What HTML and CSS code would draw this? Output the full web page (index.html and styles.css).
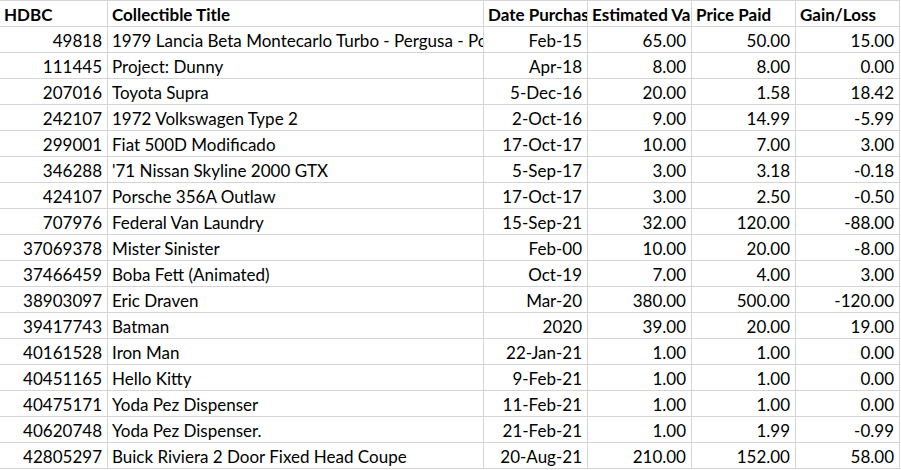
FILE: index.html
```html
<!DOCTYPE html>
<html>
<head>
<meta charset="utf-8">
<link rel="stylesheet" href="styles.css">
</head>
<body>
<div class="sheet">
  <div class="c h">HDBC</div><div class="c h">Collectible Title</div><div class="c h">Date Purchased</div><div class="c h">Estimated Value</div><div class="c h">Price Paid</div><div class="c h">Gain/Loss</div>
  <div class="c r">49818</div><div class="c">1979 Lancia Beta Montecarlo Turbo - Pergusa - Porsche</div><div class="c r">Feb-15</div><div class="c r">65.00</div><div class="c r">50.00</div><div class="c r">15.00</div>
  <div class="c r">111445</div><div class="c">Project: Dunny</div><div class="c r">Apr-18</div><div class="c r">8.00</div><div class="c r">8.00</div><div class="c r">0.00</div>
  <div class="c r">207016</div><div class="c">Toyota Supra</div><div class="c r">5-Dec-16</div><div class="c r">20.00</div><div class="c r">1.58</div><div class="c r">18.42</div>
  <div class="c r">242107</div><div class="c">1972 Volkswagen Type 2</div><div class="c r">2-Oct-16</div><div class="c r">9.00</div><div class="c r">14.99</div><div class="c r">-5.99</div>
  <div class="c r">299001</div><div class="c">Fiat 500D Modificado</div><div class="c r">17-Oct-17</div><div class="c r">10.00</div><div class="c r">7.00</div><div class="c r">3.00</div>
  <div class="c r">346288</div><div class="c">'71 Nissan Skyline 2000 GTX</div><div class="c r">5-Sep-17</div><div class="c r">3.00</div><div class="c r">3.18</div><div class="c r">-0.18</div>
  <div class="c r">424107</div><div class="c">Porsche 356A Outlaw</div><div class="c r">17-Oct-17</div><div class="c r">3.00</div><div class="c r">2.50</div><div class="c r">-0.50</div>
  <div class="c r">707976</div><div class="c">Federal Van Laundry</div><div class="c r">15-Sep-21</div><div class="c r">32.00</div><div class="c r">120.00</div><div class="c r">-88.00</div>
  <div class="c r">37069378</div><div class="c">Mister Sinister</div><div class="c r">Feb-00</div><div class="c r">10.00</div><div class="c r">20.00</div><div class="c r">-8.00</div>
  <div class="c r">37466459</div><div class="c">Boba Fett (Animated)</div><div class="c r">Oct-19</div><div class="c r">7.00</div><div class="c r">4.00</div><div class="c r">3.00</div>
  <div class="c r">38903097</div><div class="c">Eric Draven</div><div class="c r">Mar-20</div><div class="c r">380.00</div><div class="c r">500.00</div><div class="c r">-120.00</div>
  <div class="c r">39417743</div><div class="c">Batman</div><div class="c r">2020</div><div class="c r">39.00</div><div class="c r">20.00</div><div class="c r">19.00</div>
  <div class="c r">40161528</div><div class="c">Iron Man</div><div class="c r">22-Jan-21</div><div class="c r">1.00</div><div class="c r">1.00</div><div class="c r">0.00</div>
  <div class="c r">40451165</div><div class="c">Hello Kitty</div><div class="c r">9-Feb-21</div><div class="c r">1.00</div><div class="c r">1.00</div><div class="c r">0.00</div>
  <div class="c r">40475171</div><div class="c">Yoda Pez Dispenser</div><div class="c r">11-Feb-21</div><div class="c r">1.00</div><div class="c r">1.00</div><div class="c r">0.00</div>
  <div class="c r">40620748</div><div class="c">Yoda Pez Dispenser.</div><div class="c r">21-Feb-21</div><div class="c r">1.00</div><div class="c r">1.99</div><div class="c r">-0.99</div>
  <div class="c r">42805297</div><div class="c">Buick Riviera 2 Door Fixed Head Coupe</div><div class="c r">20-Aug-21</div><div class="c r">210.00</div><div class="c r">152.00</div><div class="c r">58.00</div>
</div>
</body>
</html>
```

FILE: styles.css
```css
html, body {
  margin: 0;
  padding: 0;
  background: #ffffff;
}
.sheet {
  display: grid;
  grid-template-columns: 107px 375px 103px 103px 103px 103px;
  grid-auto-rows: 25px;
  gap: 1px;
  padding: 1px 1px 1px 0;
  background: #d4d4d4;
  width: max-content;
  font-family: Lato, "Open Sans", sans-serif;
  font-size: 17px;
  color: #000;
}
.c {
  background: #fff;
  line-height: 25px;
  padding: 1px 5px 0 4px;
  white-space: nowrap;
  overflow: hidden;
}
.h {
  font-weight: bold;
}
.r {
  text-align: right;
}
```
